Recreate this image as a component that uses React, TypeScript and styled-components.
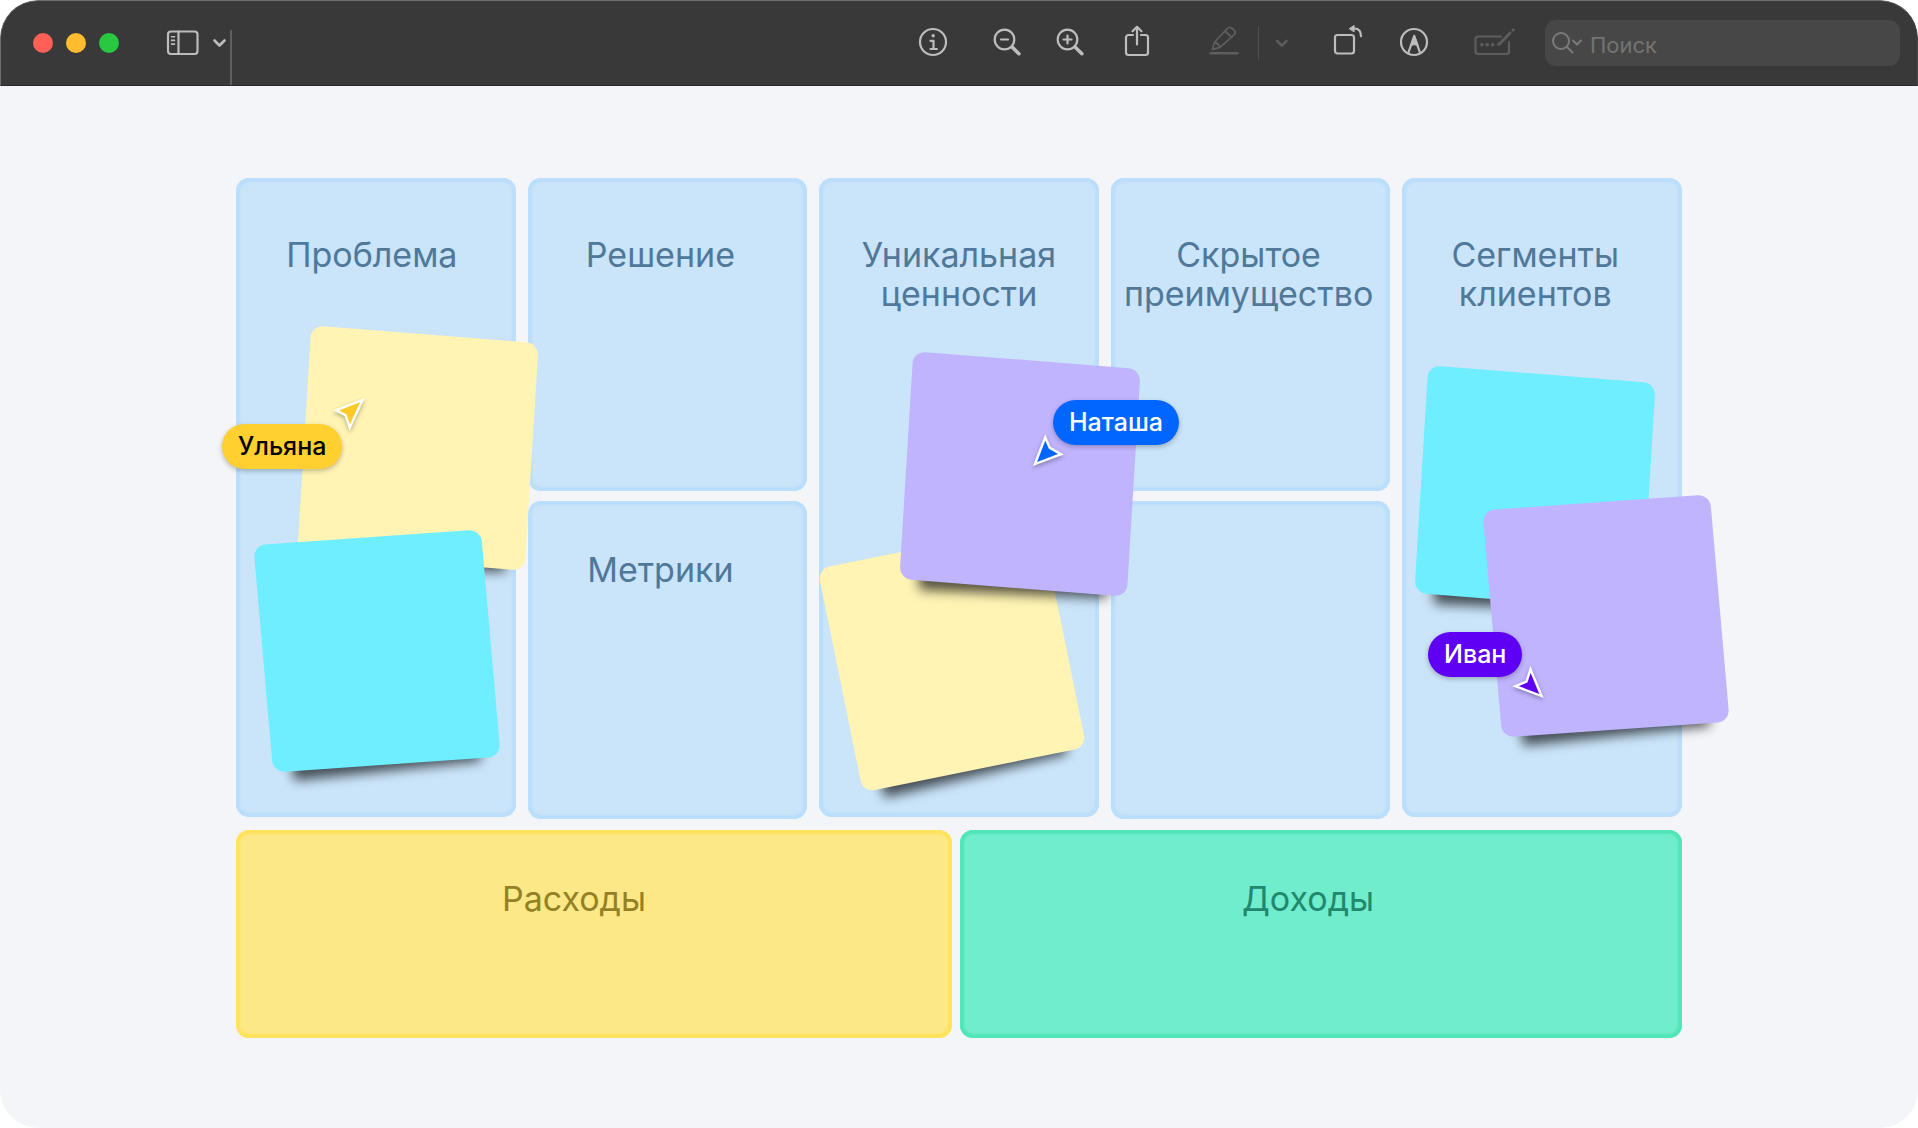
import React from "react";
import styled, { createGlobalStyle } from "styled-components";

const BOARD_WIDTH = 1446;

const GlobalStyle = createGlobalStyle`
  * { box-sizing: border-box; }
  body {
    margin: 0;
    background: #ffffff;
    font-family: Inter, "Liberation Sans", sans-serif;
  }
  button, input { font: inherit; }
`;

const Window = styled.div`
  min-height: 100vh;
  display: flex;
  flex-direction: column;
  border-radius: 38px;
  overflow: hidden;
  background: #f3f5f9;
`;

const Toolbar = styled.header`
  height: 86px;
  flex: none;
  display: flex;
  align-items: center;
  padding: 0 17px 0 32px;
  background: #393939;
  border: 1px solid #6d6e6e;
  border-right-color: #4a4a4a;
  border-bottom-color: #2b292c;
  border-radius: 38px 38px 0 0;
`;

const Lights = styled.div`
  display: flex;
  gap: 13px;
`;

const Light = styled.button<{ $color: string }>`
  width: 20px;
  height: 20px;
  padding: 0;
  border: 0;
  border-radius: 50%;
  background: ${(p) => p.$color};
`;

const Tool = styled.button<{ $width: number; $gap: number; $dim?: boolean }>`
  flex: none;
  width: ${(p) => p.$width}px;
  height: 36px;
  margin: 0 0 0 ${(p) => p.$gap}px;
  padding: 0;
  border: 0;
  background: none;
  color: ${(p) => (p.$dim ? "#5e5e5e" : "#bdbdbd")};

  svg {
    display: block;
    width: 100%;
    height: 100%;
    overflow: visible;
    fill: none;
    stroke: currentColor;
    stroke-width: 2.2;
    stroke-linecap: round;
    stroke-linejoin: round;
  }
`;

const SidebarEdge = styled.div`
  width: 2px;
  height: 55px;
  margin-left: 3px;
  align-self: flex-end;
  background: #606060;
`;

const Separator = styled.div`
  width: 1px;
  height: 34px;
  margin-left: 19px;
  background: #4e4e4e;
`;

const Actions = styled.div`
  display: flex;
  align-items: center;
  margin-left: auto;
`;

const Search = styled.label`
  flex: 0 1 355px;
  min-width: 120px;
  height: 46px;
  margin-left: 29px;
  padding-left: 7px;
  display: flex;
  align-items: center;
  gap: 6px;
  border-radius: 11px;
  background: #474747;
  color: #7a7a7a;

  svg {
    flex: none;
    fill: none;
    stroke: currentColor;
    stroke-width: 2;
    stroke-linecap: round;
    stroke-linejoin: round;
  }
`;

const SearchInput = styled.input`
  flex: 1;
  min-width: 0;
  padding: 3px 0 0;
  border: 0;
  outline: 0;
  background: none;
  color: #c8c8c8;
  font-size: 22px;
  line-height: 28px;

  &::placeholder {
    color: #747474;
    opacity: 1;
  }
`;

const Canvas = styled.main`
  flex: 1;
  padding: 92px 24px 90px;
`;

const Board = styled.div`
  position: relative;
  max-width: ${BOARD_WIDTH}px;
  margin: 0 auto;
  display: flex;
  flex-direction: column;
  gap: 11px;
`;

const Columns = styled.div`
  display: grid;
  grid-template-columns: repeat(5, minmax(0, 1fr));
  gap: 12px;
  align-items: start;
`;

const Stack = styled.div`
  display: flex;
  flex-direction: column;
  gap: 10px;
`;

const Totals = styled.div`
  display: grid;
  grid-template-columns: 716fr 722fr;
  gap: 8px;
`;

const tones = {
  blue: { fill: "#cae4f9", edge: "#badefc", text: "#4f7899" },
  yellow: { fill: "#fde888", edge: "#ffe35c", text: "#948126" },
  green: { fill: "#70edcc", edge: "#50e6b7", text: "#22886d" },
};

type Tone = keyof typeof tones;

const Tile = styled.section<{ $tone?: Tone; $height: number; $top: number; $shift?: number }>`
  min-height: ${(p) => p.$height}px;
  padding: ${(p) => p.$top}px ${(p) => p.$shift ?? 0}px 0 0;
  border-radius: 13px;
  background: ${(p) => tones[p.$tone ?? "blue"].fill};
  box-shadow: inset 0 0 2px 4px ${(p) => tones[p.$tone ?? "blue"].edge};
  color: ${(p) => tones[p.$tone ?? "blue"].text};
`;

const Title = styled.h2`
  margin: 0;
  font-size: 34px;
  font-weight: 400;
  line-height: 39px;
  text-align: center;
`;

const Note = styled.div<{ $x: number; $y: number; $color: string; $lean: "left" | "right" | "far" }>`
  position: absolute;
  left: ${(p) => (p.$x / BOARD_WIDTH) * 100}%;
  top: ${(p) => p.$y}px;
  width: 228px;
  height: 228px;
  transform: translate(-50%, -50%)
    ${(p) =>
      ({
        left: "rotate(-5deg) skewY(1deg)",
        right: "rotate(3.5deg) skewY(1deg)",
        far: "rotate(-11.5deg)",
      })[p.$lean]};

  &::before {
    content: "";
    position: absolute;
    left: 20px;
    right: 20px;
    bottom: -3px;
    height: 30px;
    background: rgba(0, 0, 0, 0.66);
    filter: blur(6px);
    transform: rotate(-2deg);
    transform-origin: right bottom;
  }

  &::after {
    content: "";
    position: absolute;
    inset: 0;
    border-radius: 12px;
    background: ${(p) => p.$color};
  }
`;

const NameTag = styled.span<{ $x: number; $y: number; $color: string; $dark?: boolean }>`
  position: absolute;
  left: ${(p) => (p.$x / BOARD_WIDTH) * 100}%;
  top: ${(p) => p.$y}px;
  padding: 0 16px;
  border-radius: 23px;
  background: ${(p) => p.$color};
  color: ${(p) => (p.$dark ? "#000000" : "#ffffff")};
  font-size: 25px;
  font-weight: 500;
  line-height: 45px;
  white-space: nowrap;
  box-shadow: 0 2px 5px rgba(0, 0, 0, 0.25);
`;

const Cursor = styled.svg<{ $x: number; $y: number; $color: string }>`
  position: absolute;
  left: ${(p) => (p.$x / BOARD_WIDTH) * 100}%;
  top: ${(p) => p.$y}px;
  width: 33px;
  height: 34px;
  overflow: visible;
  fill: ${(p) => p.$color};
  stroke: #ffffff;
  stroke-width: 2.4;
  stroke-linejoin: miter;
  stroke-miterlimit: 8;
  filter: drop-shadow(0 2px 2px rgba(0, 0, 0, 0.3));
`;

const YELLOW = "#fff4b4";
const CYAN = "#6eeeff";
const VIOLET = "#c0b4ff";

export default function App() {
  return (
    <>
      <GlobalStyle />
      <Window>
        <Toolbar>
          <Lights>
            <Light $color="#ff5f57" aria-label="Закрыть" />
            <Light $color="#febc2e" aria-label="Свернуть" />
            <Light $color="#28c840" aria-label="Развернуть" />
          </Lights>
          <Tool $width={34} $gap={47} aria-label="Боковая панель">
            <svg viewBox="0 0 34 36">
              <rect x="2" y="6.5" width="29.5" height="22.5" rx="3" />
              <path d="M12.5 6.5V29" />
              <path d="M5.5 11.7h3M5.5 15.4h3M5.5 19.1h3" strokeWidth="1.6" />
            </svg>
          </Tool>
          <Tool $width={15} $gap={12} aria-label="Вид панели">
            <svg viewBox="0 0 15 36">
              <path d="M2.5 15.5l5 5 5-5" strokeWidth="2.6" />
            </svg>
          </Tool>
          <SidebarEdge />

          <Actions>
            <Tool $width={28} $gap={0} aria-label="Информация">
              <svg viewBox="0 0 28 36">
                <circle cx="14" cy="17" r="13" />
                <circle cx="14.2" cy="10.8" r="1.7" fill="currentColor" stroke="none" />
                <path d="M11.5 15.8h3v8.2M11.5 24h6.4" />
              </svg>
            </Tool>
            <Tool $width={28} $gap={46} aria-label="Уменьшить">
              <svg viewBox="0 0 28 36">
                <circle cx="11.5" cy="14.5" r="9.8" />
                <path d="M8 14.5h7" />
                <path d="M19.3 22.3l6.6 6.4" strokeWidth="3.6" />
              </svg>
            </Tool>
            <Tool $width={28} $gap={35} aria-label="Увеличить">
              <svg viewBox="0 0 28 36">
                <circle cx="11.5" cy="14.5" r="9.8" />
                <path d="M7.5 14.5h8M11.5 10.5v8" />
                <path d="M19.3 22.3l6.6 6.4" strokeWidth="3.6" />
              </svg>
            </Tool>
            <Tool $width={26} $gap={40} aria-label="Поделиться">
              <svg viewBox="0 0 26 36">
                <path d="M9 10H4.500a2.500 2.500 0 0 0-2.500 2.500V27.500a2.500 2.500 0 0 0 2.500 2.500h17a2.500 2.500 0 0 0 2.500-2.500V12.500a2.500 2.500 0 0 0-2.500-2.500H17" />
                <path d="M13 19.500V2M8.500 6.200L13 1.800l4.500 4.400" />
              </svg>
            </Tool>
            <Tool $width={30} $gap={59} $dim aria-label="Выделение">
              <svg viewBox="0 0 30 36">
                <path d="M1.500 28.300h27" strokeWidth="2.4" />
                <path d="M3.500 24.300L5.300 17.500 18.300 3.600q2.200-2.200 4.600-.4l2.200 1.900q2.200 2 .2 4.500L11 22.300z" strokeWidth="1.800" />
                <path d="M16 6l6.800 6.300M5.300 17.500q4.500.5 5.500 4.800" strokeWidth="1.800" />
              </svg>
            </Tool>
            <Separator />
            <Tool $width={14} $gap={16} $dim aria-label="Цвет выделения">
              <svg viewBox="0 0 14 36">
                <path d="M2 15.800l4.800 4.800 4.800-4.800" strokeWidth="2.4" />
              </svg>
            </Tool>
            <Tool $width={30} $gap={44} aria-label="Повернуть">
              <svg viewBox="0 0 30 36">
                <rect x="2" y="10" width="19" height="18.500" rx="2.500" />
                <path d="M21.500 3.500c4 0 6.500 2.800 6.500 7.700" />
                <path d="M16.500 3.500l4.600-3v6z" fill="currentColor" strokeWidth="1" />
              </svg>
            </Tool>
            <Tool $width={28} $gap={37} aria-label="Разметка">
              <svg viewBox="0 0 28 36">
                <circle cx="14" cy="17" r="13" />
                <path d="M14.200 11L8.300 28M14.200 11l5.900 17" />
                <path d="M14.200 10.500l-3.700 10q3.700-1.600 7.400 0z" fill="currentColor" strokeWidth="1" />
              </svg>
            </Tool>
            <Tool $width={42} $gap={46} $dim aria-label="Заполнить форму">
              <svg viewBox="0 0 42 36">
                <path d="M27 11.500H4a2.500 2.500 0 0 0-2.500 2.500v12.500A2.500 2.500 0 0 0 4 29h28.500a2.500 2.500 0 0 0 2.500-2.500V17" />
                <path d="M26 18.500L36 8" strokeWidth="2.800" />
                <path d="M23.800 20.300l2.600-.6-2-2z" fill="currentColor" strokeWidth="1" />
                <path d="M39 5.200l.4-.4" strokeWidth="2.800" />
                <path d="M7.800 19.700h.1M13.200 19.700h.1M18.600 19.700h.1" strokeWidth="3.400" />
              </svg>
            </Tool>
            <Search>
              <svg width="32" height="36" viewBox="0 0 32 36" aria-hidden="true">
                <circle cx="9" cy="16" r="8" />
                <path d="M15 22l5.500 5.500" />
                <path d="M21 15.500l4 4 4-4" />
              </svg>
              <SearchInput type="search" placeholder="Поиск" aria-label="Поиск" />
            </Search>
          </Actions>
        </Toolbar>

        <Canvas>
          <Board>
            <Columns>
              <Tile $height={639} $top={57} $shift={8}>
                <Title>Проблема</Title>
              </Tile>
              <Stack>
                <Tile $height={313} $top={57} $shift={14}>
                  <Title>Решение</Title>
                </Tile>
                <Tile $height={318} $top={49} $shift={14}>
                  <Title>Метрики</Title>
                </Tile>
              </Stack>
              <Tile $height={639} $top={57}>
                <Title>Уникальная ценности</Title>
              </Tile>
              <Stack>
                <Tile $height={313} $top={57} $shift={4}>
                  <Title>Скрытое преимущество</Title>
                </Tile>
                <Tile $height={318} $top={49} />
              </Stack>
              <Tile $height={639} $top={57} $shift={14}>
                <Title>Сегменты клиентов</Title>
              </Tile>
            </Columns>
            <Totals>
              <Tile $tone="yellow" $height={208} $top={49} $shift={40}>
                <Title>Расходы</Title>
              </Tile>
              <Tile $tone="green" $height={208} $top={49} $shift={26}>
                <Title>Доходы</Title>
              </Tile>
            </Totals>

            <Note $x={182} $y={270} $color={YELLOW} $lean="right" />
            <Note $x={141} $y={473} $color={CYAN} $lean="left" />
            <Note $x={716} $y={480} $color={YELLOW} $lean="far" />
            <Note $x={784} $y={296} $color={VIOLET} $lean="right" />
            <Note $x={1299} $y={310} $color={CYAN} $lean="right" />
            <Note $x={1370} $y={438} $color={VIOLET} $lean="left" />

            <Cursor $x={97} $y={220} $color="#ffc928" viewBox="0 0 33 34" aria-hidden="true">
              <path d="M29.500 2L3 12.300l9.500 4.800 4.300 12.400z" />
            </Cursor>
            <NameTag $x={-14} $y={246} $color="#ffd02f" $dark>
              Ульяна
            </NameTag>

            <Cursor $x={796} $y={255} $color="#0066ff" viewBox="0 0 33 34" aria-hidden="true">
              <path d="M3 31L13.200 4.500l4.600 10.300 11.200 6.400z" />
            </Cursor>
            <NameTag $x={817} $y={222} $color="#0066ff">
              Наташа
            </NameTag>

            <Cursor $x={1276} $y={487} $color="#5f00f5" viewBox="0 0 33 34" aria-hidden="true">
              <path d="M29.500 31L3.500 21.200l11-4.700L18.500 4.500z" />
            </Cursor>
            <NameTag $x={1192} $y={454} $color="#5f00f5">
              Иван
            </NameTag>
          </Board>
        </Canvas>
      </Window>
    </>
  );
}
